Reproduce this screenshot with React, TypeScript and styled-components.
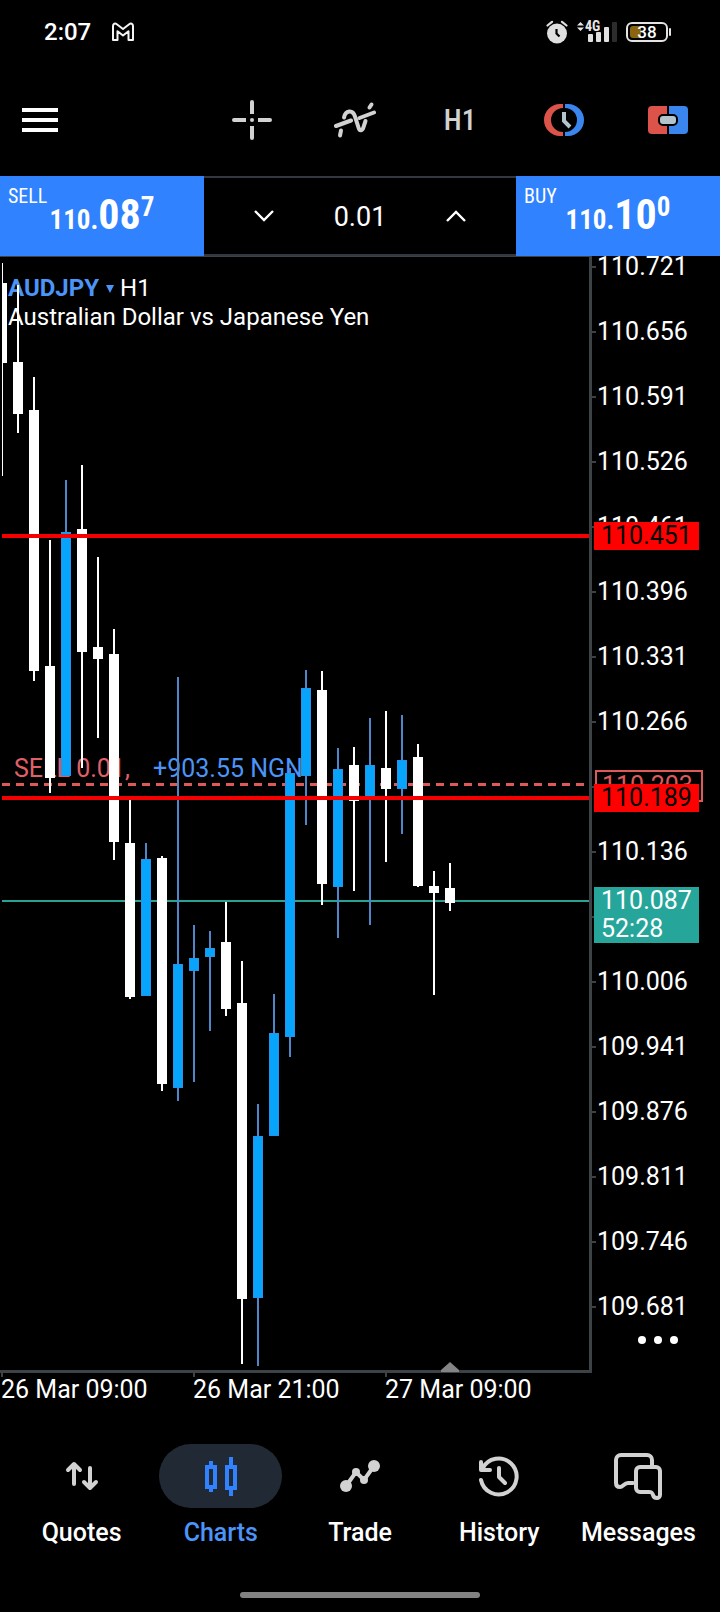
import React from "react";
import styled, { createGlobalStyle, css } from "styled-components";

const GlobalStyle = createGlobalStyle`
  *, *::before, *::after { box-sizing: border-box; }
  body {
    margin: 0;
    background: #000;
    color: #fff;
    font-family: Roboto, "Liberation Sans", sans-serif;
  }
  button, input { font: inherit; color: inherit; }
  ul { list-style: none; margin: 0; padding: 0; }
`;

const NARROW = `"Roboto Condensed", "Liberation Sans Narrow", Roboto, sans-serif`;
const ICON = "#d2d2d2";

const Screen = styled.div`
  display: flex;
  flex-direction: column;
  min-height: 100vh;
  overflow: hidden;
`;

/* ---------- status bar ---------- */

const StatusBar = styled.header`
  display: flex;
  align-items: center;
  justify-content: space-between;
  height: 64px;
  padding: 0 48px 0 44px;
`;

const StatusGroup = styled.div<{ $gap: number }>`
  display: flex;
  align-items: center;
  gap: ${(p) => p.$gap}px;
`;

const Clock = styled.time`
  font-size: 24px;
  font-weight: 500;
  line-height: 28px;
`;

const Signal = styled.div`
  position: relative;
  display: flex;
`;

const Network = styled.span`
  position: absolute;
  top: -2px;
  left: 8px;
  font-family: ${NARROW};
  font-size: 14px;
  font-weight: 700;
  line-height: 14px;
  color: #e6e6e6;
`;

const Battery = styled.div`
  position: relative;
  display: flex;
`;

const BatteryLevel = styled.span`
  position: absolute;
  inset: 0 4px 0 0;
  font-size: 17px;
  font-weight: 500;
  line-height: 21px;
  text-align: center;
`;

/* ---------- toolbar ---------- */

const Toolbar = styled.nav`
  display: flex;
  align-items: center;
  justify-content: space-between;
  height: 112px;
  padding-left: 20px;
`;

const PlainButton = styled.button`
  display: flex;
  align-items: center;
  justify-content: center;
  padding: 0;
  border: 0;
  background: none;
  cursor: pointer;
`;

const MenuButton = styled(PlainButton)`
  width: 40px;
  height: 48px;
`;

const Tools = styled.div`
  display: flex;
`;

const ToolButton = styled(PlainButton)`
  width: 104px;
  height: 64px;
  font-family: ${NARROW};
  font-size: 29px;
  font-weight: 500;
  color: ${ICON};
`;

/* ---------- one-click trading ---------- */

const TradeBar = styled.section`
  display: grid;
  grid-template-columns: minmax(0, 17fr) minmax(0, 26fr) minmax(0, 17fr);
  height: 80px;
`;

const DealButton = styled.button`
  position: relative;
  display: flex;
  justify-content: center;
  padding: 15px 0 0;
  border: 0;
  background: #3082ff;
  font-family: ${NARROW};
  cursor: pointer;
`;

const DealSide = styled.span`
  position: absolute;
  top: 8px;
  left: 8px;
  font-size: 20px;
  line-height: 24px;
`;

const Quote = styled.span`
  display: flex;
  align-items: baseline;
  font-weight: 700;
  line-height: 48px;
`;

const QuoteBase = styled.span`
  font-size: 27px;
`;

const QuoteBig = styled.span`
  font-size: 42px;
`;

const QuotePip = styled.span`
  align-self: flex-start;
  font-size: 27px;
  line-height: 32px;
`;

const Volume = styled.div`
  display: flex;
  padding: 0 12px;
  border: solid #333840;
  border-width: 2px 0;
`;

const StepButton = styled(PlainButton)`
  flex: 1;
`;

const VolumeInput = styled.input`
  flex: 1;
  min-width: 0;
  padding: 2px 0 0;
  border: 0;
  background: none;
  outline: none;
  font-size: 27px;
  text-align: center;
`;

/* ---------- chart ---------- */

const AXIS = "#3d4247";
const ChartArea = styled.main`
  display: grid;
  grid-template-columns: 1fr 128px;
`;

const Plot = styled.div`
  position: relative;
  border: solid ${AXIS};
  border-width: 0 3px 3px 0;
`;

const PlotSvg = styled.svg`
  position: relative;
  display: block;
  width: 100%;
`;

const Annotation = styled.text`
  font-size: 25px;
`;

const SymbolInfo = styled.div`
  position: absolute;
  top: 18px;
  left: 8px;
  font-size: 24px;
  line-height: 29px;
`;

const SymbolRow = styled.h1`
  display: flex;
  align-items: center;
  gap: 6px;
  margin: 0;
  font: inherit;
`;

const SymbolButton = styled(PlainButton)`
  gap: 7px;
  font-weight: 700;
  color: #4c94f8;
`;

const Description = styled.p`
  margin: 0;
`;

const EndMarker = styled.svg`
  position: absolute;
  bottom: -2px;
  left: 441px;
`;

const PriceAxis = styled.div`
  position: relative;
`;

const PriceLabel = styled.li`
  display: flex;
  align-items: center;
  gap: 1px;
  height: 22px;
  margin-bottom: 43px;
  font-size: 25px;
  line-height: 22px;

  &::before {
    content: "";
    width: 4px;
    height: 2px;
    background: ${AXIS};
  }

  &:last-child { margin-bottom: 0; }
`;

const PriceTag = styled.div<{ $kind: "level" | "position" | "bid" }>`
  position: absolute;
  left: 2px;
  width: 105px;
  padding-left: 7px;
  font-size: 25px;
  line-height: 28px;
  transform: translateY(-14px);

  ${(p) => p.$kind === "level" && css`
    background: #ff0000;
    color: #000;
  `}
  ${(p) => p.$kind === "bid" && css`
    transform: translateY(-13px);
    background: #26a69a;
  `}
  ${(p) => p.$kind === "position" && css`
    left: 3px;
    width: 108px;
    border: 2px solid #dd5a5a;
    padding-left: 5px;
    background: #000;
    color: #dd5a5a;
  `}
`;

const MoreButton = styled(PlainButton)`
  position: absolute;
  right: 38px;
  bottom: 17px;
  width: 48px;
  height: 32px;
`;

const TimeAxis = styled.ul`
  grid-column: 1 / -1;
  display: flex;
  height: 59px;
  padding-left: 1px;
`;

const TimeLabel = styled.li`
  width: 192px;
  font-size: 25px;
  line-height: 26px;
  white-space: nowrap;

  &::before {
    content: "";
    display: block;
    width: 2px;
    height: 4px;
    background: ${AXIS};
  }
`;

/* ---------- bottom navigation ---------- */

const BottomNav = styled.nav`
  display: flex;
  padding: 12px 12px 0;
`;

const NavLink = styled.a<{ $active?: boolean }>`
  flex: 1;
  display: flex;
  flex-direction: column;
  align-items: center;
  gap: 10px;
  min-width: 0;
  font-size: 25px;
  font-weight: 500;
  line-height: 30px;
  text-decoration: none;
  color: ${(p) => (p.$active ? "#4c94f8" : "#fff")};
`;

const NavIcon = styled.span<{ $active?: boolean }>`
  display: flex;
  align-items: center;
  justify-content: center;
  width: 123px;
  height: 64px;
  border-radius: 32px;
  background: ${(p) => (p.$active ? "#212a34" : "transparent")};
`;

const GestureBar = styled.div`
  width: 240px;
  height: 6px;
  margin: auto auto 14px;
  border-radius: 3px;
  background: #828282;
`;

/* ---------- data ---------- */

/* Prices are kept in points (0.001); one point is one pixel high. */
const TOP_POINTS = 110731;
const PLOT_HEIGHT = 1114;
const yOf = (points: number) => TOP_POINTS - points;
const format = (points: number) => (points / 1000).toFixed(3);

/* [open, high, low, close] */
const CANDLES: [number, number, number, number][] = [
  [110704, 110724, 110511, 110624],
  [110625, 110702, 110554, 110573],
  [110577, 110610, 110306, 110316],
  [110321, 110447, 110194, 110209],
  [110211, 110507, 110211, 110455],
  [110458, 110522, 110219, 110335],
  [110340, 110430, 110249, 110328],
  [110333, 110358, 110127, 110145],
  [110144, 110187, 109988, 109990],
  [109991, 110144, 109991, 110128],
  [110129, 110131, 109896, 109903],
  [109899, 110310, 109886, 110023],
  [110016, 110062, 109905, 110029],
  [110030, 110056, 109956, 110039],
  [110045, 110085, 109971, 109978],
  [109984, 110026, 109623, 109688],
  [109689, 109883, 109621, 109851],
  [109851, 109993, 109851, 109954],
  [109950, 110219, 109930, 110214],
  [110211, 110317, 110162, 110299],
  [110297, 110316, 110082, 110103],
  [110100, 110239, 110049, 110218],
  [110222, 110240, 110096, 110186],
  [110189, 110269, 110062, 110222],
  [110219, 110276, 110125, 110198],
  [110198, 110272, 110153, 110227],
  [110230, 110243, 110100, 110101],
  [110101, 110116, 109992, 110094],
  [110099, 110124, 110076, 110084],
];

const GRID_PRICES = Array.from({ length: 17 }, (_, i) => 110721 - i * 65);
const LEVELS = [110451, 110189];
const POSITION = 110203;
const BID = 110087;
const TIMES = ["26 Mar 09:00", "26 Mar 21:00", "27 Mar 09:00"];

/* ---------- icons ---------- */

const GmailIcon = () => (
  <svg width="24" height="20" viewBox="0 0 24 20" fill="none" stroke="#f4f4f4" strokeWidth="2" strokeLinejoin="round">
    <path d="M2 18V4c0-2.400 2.200-3 3.800-1.800L12 7l6.200-4.800C19.800 1 22 1.600 22 4v14h-4.500V9.200L12 13.500 6.500 9.200V18z" />
  </svg>
);

const AlarmIcon = () => (
  <svg width="22" height="24" viewBox="0 0 22 24" fill="none">
    <circle cx="11" cy="13.500" r="10" fill="#dedede" />
    <path d="M1.500 5.500 6 1.800M20.500 5.500 16 1.800" stroke="#dedede" strokeWidth="2.200" strokeLinecap="round" />
    <path d="M10.500 9v4.500l3 3" stroke="#000" strokeWidth="2.200" />
  </svg>
);

const SignalIcon = () => (
  <svg width="40" height="22" viewBox="0 0 40 22">
    <path d="M0 4.500 3.500 1 7 4.500zM0 6.500h7L3.500 10z" fill="#e6e6e6" />
    <g fill="#e0e0e0">
      <rect x="11" y="13" width="5" height="8" rx="1" />
      <rect x="19" y="11" width="5" height="10" rx="1" />
      <rect x="27" y="6" width="5" height="15" rx="1" />
    </g>
    <rect x="35" y="1" width="5" height="20" rx="1" fill="#2c2c2c" />
  </svg>
);

const BatteryIcon = () => (
  <svg width="46" height="20" viewBox="0 0 46 20" fill="none">
    <rect x="1" y="1" width="40" height="18" rx="5" stroke="#e4e4e4" strokeWidth="2" />
    <path d="M7 4h8v12H7a3 3 0 0 1-3-3V7a3 3 0 0 1 3-3z" fill="#8a6410" />
    <path d="M44 7v6" stroke="#e4e4e4" strokeWidth="2" strokeLinecap="round" />
  </svg>
);

const MenuIcon = () => (
  <svg width="36" height="24" viewBox="0 0 36 24" fill="#fff">
    <path d="M0 0h36v4H0zM0 10h36v4H0zM0 20h36v4H0z" />
  </svg>
);

const CrosshairIcon = () => (
  <svg width="40" height="40" viewBox="0 0 40 40" fill={ICON}>
    <path d="M18 14V2a2 2 0 0 1 4 0v12zM18 26v12a2 2 0 0 0 4 0V26zM14 18H2a2 2 0 0 0 0 4h12zM26 18h12a2 2 0 0 1 0 4H26z" />
    <circle cx="20" cy="20" r="2" />
  </svg>
);

const IndicatorIcon = () => (
  <svg width="44" height="40" viewBox="0 0 44 40" fill="none" stroke={ICON} strokeWidth="4" strokeLinecap="round">
    <path d="M6 35.500 7 30.500M10 17.500c1.500-7 8.500-8.500 11-1l3.500 11c1 4 4 3.500 5-.5L31.500 21M35.500 7.500 37.500 4.500" />
    <path d="M2 26 17 20.500M25.500 18 40 12.500" />
  </svg>
);

const HistoryDealsIcon = () => (
  <svg width="40" height="32" viewBox="0 0 40 32" fill="none">
    <path d="M19 0h-3a16 16 0 0 0 0 32h3v-4a12 12 0 0 1 0-24z" fill="#dc5349" />
    <path d="M21 0h3a16 16 0 0 1 0 32h-3v-4a12 12 0 0 0 0-24z" fill="#3a86ee" />
    <path d="M20 8v9l6 6" stroke="#b4c4cc" strokeWidth="4" />
  </svg>
);

const OneClickIcon = () => (
  <svg width="40" height="28" viewBox="0 0 40 28">
    <path d="M19 0H4a4 4 0 0 0-4 4v20a4 4 0 0 0 4 4h15z" fill="#dc5349" />
    <path d="M21 0h15a4 4 0 0 1 4 4v20a4 4 0 0 1-4 4H21z" fill="#3a86ee" />
    <rect x="11" y="9" width="18" height="10" rx="4" fill="#b4c4cc" stroke="#000" strokeWidth="2" />
  </svg>
);

const Chevron = ({ up }: { up?: boolean }) => (
  <svg width="20" height="12" viewBox="0 0 20 12" fill="none" stroke="#fff" strokeWidth="2.400">
    <path d={up ? "M1 11l9-9 9 9" : "M1 1l9 9 9-9"} />
  </svg>
);

const QuotesIcon = () => (
  <svg width="40" height="40" viewBox="0 0 40 40" fill="none" stroke={ICON} strokeWidth="4" strokeLinecap="round" strokeLinejoin="round">
    <path d="M12 28V8M6 14l6-6 6 6M28 12v20M22 26l6 6 6-6" />
  </svg>
);

const ChartsIcon = () => (
  <svg width="40" height="40" viewBox="0 0 40 40" fill="none" stroke="#3082ff" strokeWidth="4">
    <path d="M6 11h8v20H6zM10 5v5M10 31v5M26 11h8v21h-8zM30 1v9M30 32v8" />
  </svg>
);

const TradeIcon = () => (
  <svg width="40" height="40" viewBox="0 0 40 40" fill={ICON}>
    <path d="M6 30 16 16l8 8L34 10" fill="none" stroke={ICON} strokeWidth="4" />
    <circle cx="6" cy="30" r="6" />
    <circle cx="16" cy="16" r="4" />
    <circle cx="24" cy="24" r="4" />
    <circle cx="34" cy="10" r="6" />
  </svg>
);

const HistoryIcon = () => (
  <svg width="44" height="44" viewBox="-2 -2 44 44" fill="none" stroke={ICON} strokeWidth="4" strokeLinecap="round" strokeLinejoin="round">
    <path d="M2 24A18 18 0 1 0 3.500 12.500M2 6v8h9M20 12v9l6 6" />
  </svg>
);

const MessagesIcon = () => (
  <svg width="48" height="48" viewBox="0 0 48 48" fill="none" stroke={ICON} strokeWidth="4" strokeLinecap="round" strokeLinejoin="round">
    <path d="M19 31h-5c-4 0-5 4-8 4-2 0-4-1-4-4V8a5 5 0 0 1 5-5h26a5 5 0 0 1 5 5v6" />
    <path d="M26 15h16a4 4 0 0 1 4 4v24c0 4-6 4-7 0-1-3-2-3-4-3h-9a4 4 0 0 1-4-4V19a4 4 0 0 1 4-4z" />
  </svg>
);

/* ---------- parts ---------- */

const Candle = ({ index }: { index: number }) => {
  const [open, high, low, close] = CANDLES[index];
  const x = 2 + index * 16;
  const top = yOf(Math.max(open, close));
  const height = Math.abs(open - close);
  const rising = close > open;
  return (
    <g>
      <rect x={x - 1} y={yOf(high)} width={2} height={high - low} fill={rising ? "#4f86c8" : "#fff"} />
      <rect x={x - 5} y={top} width={10} height={height} fill={rising ? "#2692ea" : "#fff"} />
      {rising && <rect x={x - 4} y={top + 1} width={8} height={height - 2} fill="#08a4fb" />}
    </g>
  );
};

const PriceChart = () => (
  <PlotSvg height={PLOT_HEIGHT} role="img" aria-label="AUDJPY hourly candles">
    <defs>
      <clipPath id="plot-area">
        <rect x="2" y="0" width="100%" height={PLOT_HEIGHT} />
      </clipPath>
    </defs>
    <rect width="100%" height="1" fill={AXIS} />
    <g clipPath="url(#plot-area)">
      <Annotation x="14" y="521" fill="#e0606a">SELL 0.01,</Annotation>
      <Annotation x="153" y="521" fill="#4c94f8">+903.55 NGN</Annotation>
      <line x1="2" x2="100%" y1={yOf(POSITION) + 0.5} y2={yOf(POSITION) + 0.5} stroke="#dd5a5a" strokeWidth="3" strokeDasharray="8 6" />
      <line x1="2" x2="100%" y1={yOf(BID) + 1} y2={yOf(BID) + 1} stroke="#2ba191" strokeWidth="2" />
      {CANDLES.map((_, i) => <Candle key={i} index={i} />)}
      {LEVELS.map((level) => (
        <line key={level} x1="2" x2="100%" y1={yOf(level)} y2={yOf(level)} stroke="#f50000" strokeWidth="4" />
      ))}
    </g>
  </PlotSvg>
);

const Deal = ({ side, base, big, pip }: { side: string; base: string; big: string; pip: string }) => (
  <DealButton type="button">
    <DealSide>{side}</DealSide>
    <Quote>
      <QuoteBase>{base}</QuoteBase>
      <QuoteBig>{big}</QuoteBig>
      <QuotePip>{pip}</QuotePip>
    </Quote>
  </DealButton>
);

const NAV = [
  { label: "Quotes", Icon: QuotesIcon },
  { label: "Charts", Icon: ChartsIcon, active: true },
  { label: "Trade", Icon: TradeIcon },
  { label: "History", Icon: HistoryIcon },
  { label: "Messages", Icon: MessagesIcon },
];

export default function App() {
  return (
    <Screen>
      <GlobalStyle />
      <StatusBar>
        <StatusGroup $gap={20}>
          <Clock>2:07</Clock>
          <GmailIcon />
        </StatusGroup>
        <StatusGroup $gap={9}>
          <AlarmIcon />
          <Signal>
            <SignalIcon />
            <Network>4G</Network>
          </Signal>
          <Battery>
            <BatteryIcon />
            <BatteryLevel>38</BatteryLevel>
          </Battery>
        </StatusGroup>
      </StatusBar>

      <Toolbar>
        <MenuButton type="button" aria-label="Menu"><MenuIcon /></MenuButton>
        <Tools>
          <ToolButton type="button" aria-label="Crosshair"><CrosshairIcon /></ToolButton>
          <ToolButton type="button" aria-label="Indicators"><IndicatorIcon /></ToolButton>
          <ToolButton type="button">H1</ToolButton>
          <ToolButton type="button" aria-label="Trade history"><HistoryDealsIcon /></ToolButton>
          <ToolButton type="button" aria-label="One-click trading"><OneClickIcon /></ToolButton>
        </Tools>
      </Toolbar>

      <TradeBar>
        <Deal side="SELL" base="110." big="08" pip="7" />
        <Volume>
          <StepButton type="button" aria-label="Decrease volume"><Chevron /></StepButton>
          <VolumeInput aria-label="Volume" defaultValue="0.01" />
          <StepButton type="button" aria-label="Increase volume"><Chevron up /></StepButton>
        </Volume>
        <Deal side="BUY" base="110." big="10" pip="0" />
      </TradeBar>

      <ChartArea>
        <Plot>
          <SymbolInfo>
            <SymbolRow>
              <SymbolButton type="button">
                AUDJPY
                <svg width="8" height="8" viewBox="0 0 8 8" fill="#4c94f8"><path d="M0 0h8L4 8z" /></svg>
              </SymbolButton>
              H1
            </SymbolRow>
            <Description>Australian Dollar vs Japanese Yen</Description>
          </SymbolInfo>
          <PriceChart />
          <EndMarker width="18" height="10" viewBox="0 0 18 10" fill="#858585">
            <path d="M0 10V8l9-8 9 8v2z" />
          </EndMarker>
        </Plot>
        <PriceAxis>
          <ul>
            {GRID_PRICES.map((p) => <PriceLabel key={p}>{format(p)}</PriceLabel>)}
          </ul>
          <PriceTag $kind="position" style={{ top: yOf(POSITION) }}>{format(POSITION)}</PriceTag>
          {LEVELS.map((p) => (
            <PriceTag key={p} $kind="level" style={{ top: yOf(p) }}>{format(p)}</PriceTag>
          ))}
          <PriceTag $kind="bid" style={{ top: yOf(BID) }}>
            {format(BID)}
            <br />
            52:28
          </PriceTag>
          <MoreButton type="button" aria-label="More">
            <svg width="40" height="8" viewBox="0 0 40 8" fill="#fff">
              <circle cx="4" cy="4" r="4" />
              <circle cx="20" cy="4" r="4" />
              <circle cx="36" cy="4" r="4" />
            </svg>
          </MoreButton>
        </PriceAxis>
        <TimeAxis>
          {TIMES.map((t) => <TimeLabel key={t}>{t}</TimeLabel>)}
        </TimeAxis>
      </ChartArea>

      <BottomNav>
        {NAV.map(({ label, Icon, active }) => (
          <NavLink key={label} href={`#${label.toLowerCase()}`} $active={active}>
            <NavIcon $active={active}><Icon /></NavIcon>
            {label}
          </NavLink>
        ))}
      </BottomNav>
      <GestureBar />
    </Screen>
  );
}
